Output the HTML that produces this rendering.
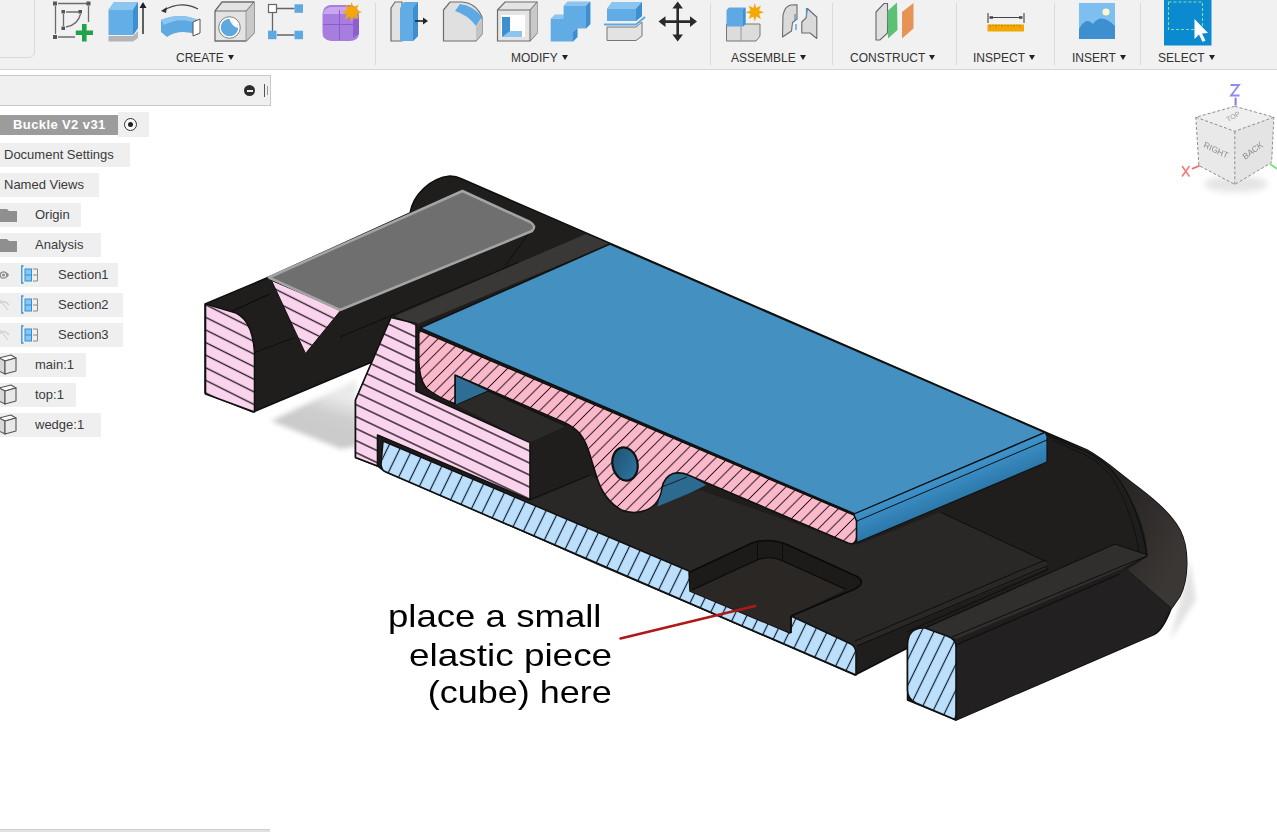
<!DOCTYPE html>
<html><head><meta charset="utf-8">
<style>
html,body{margin:0;padding:0;}
body{width:1277px;height:832px;overflow:hidden;background:#fff;position:relative;font-family:"Liberation Sans",sans-serif;}
.abs{position:absolute;}
#tb{left:0;top:0;width:1277px;height:69px;background:#f1f1f1;border-bottom:1px solid #d6d6d6;}
.sep{position:absolute;top:3px;width:1px;height:62px;background:#dcdcdc;}
.lbl{position:absolute;top:51px;font-size:12px;color:#333;white-space:nowrap;line-height:14px;}
.lbl:after{content:"";display:inline-block;margin-left:4px;border-left:3.5px solid transparent;border-right:3.5px solid transparent;border-top:5px solid #222;vertical-align:2px;}
#lbox{left:-5px;top:-5px;width:38px;height:61px;background:#f1f1f1;border:1px solid #d9d9d9;border-radius:6px;}
#ph{left:-2px;top:75px;width:271px;height:29px;background:#f0f0f0;border:1px solid #c8c8c8;}
.it{position:absolute;left:0;height:24px;background:#efefef;font-size:13px;color:#3a3a3a;line-height:24px;white-space:nowrap;}
.it span{position:absolute;}
#ann{left:0;top:0;}
.an{position:absolute;font-size:32px;color:#000;white-space:nowrap;line-height:37px;transform-origin:100% 50%;transform:scaleX(1.15);text-align:right;}
</style></head><body>
<div id="tb" class="abs">
  <div id="lbox" class="abs"></div>
  <div class="sep" style="left:375px"></div>
  <div class="sep" style="left:710px"></div>
  <div class="sep" style="left:832px"></div>
  <div class="sep" style="left:956px"></div>
  <div class="sep" style="left:1054px"></div>
  <div class="sep" style="left:1140px"></div>
  <div class="lbl" style="left:176px">CREATE</div>
  <div class="lbl" style="left:511px">MODIFY</div>
  <div class="lbl" style="left:731px">ASSEMBLE</div>
  <div class="lbl" style="left:850px">CONSTRUCT</div>
  <div class="lbl" style="left:973px">INSPECT</div>
  <div class="lbl" style="left:1072px">INSERT</div>
  <div class="lbl" style="left:1158px">SELECT</div>
  <!--ICONS-->
<svg class="abs" style="left:0;top:0" width="1277" height="69" viewBox="0 0 1277 69">
<!-- sketch -->
<g stroke="#6b6b6b" stroke-width="1.3" fill="none">
<path d="M55.5,6 V34 M58,3.5 H87 M88.5,6 V22 M58,37 H75"/>
<path d="M63.5,14 V26 M66,12 H79 M66,27 Q78,25 80.5,14"/>
</g>
<g fill="#555">
<rect x="53" y="1.5" width="4" height="4"/><rect x="86.5" y="1.5" width="4" height="4"/><rect x="53" y="35" width="4" height="4"/>
<rect x="61.5" y="10" width="3.5" height="3.5"/><rect x="78.5" y="10" width="3.5" height="3.5"/><rect x="61.5" y="26.5" width="3.5" height="3.5"/>
</g>
<path d="M84.3,24 V41.5 M75.8,32.8 H93" stroke="#1fa34a" stroke-width="4.6"/>
<!-- extrude -->
<path d="M108.5,36 L133,36 L138,31 L138,38 L133,41.5 L108.5,41.5 Z" fill="#b5b5b5"/>
<path d="M108.5,10 L114,2 L138,2 L138,28 L133,35 L108.5,35 Z" fill="#63aee6"/>
<path d="M108.5,10 L114,2 L138,2 L133,10 Z" fill="#8cc6f0"/>
<path d="M133,10 L138,2 L138,28 L133,35 Z" fill="#3d8fd0"/>
<path d="M143,34 V5" stroke="#222" stroke-width="1.4"/><path d="M139.5,8 L143,2 L146.5,8 Z" fill="#222"/>
<!-- revolve -->
<path d="M163,11 Q180,0 198,9" stroke="#444" stroke-width="1.2" fill="none"/><path d="M161,11 L167,7 L166,13 Z" fill="#333"/>
<path d="M161,20 Q180,12 198,20 L198,35 Q180,28 167,37 L161,32 Z" fill="#5da9e2"/>
<path d="M161,20 Q180,12 198,20 L198,24 Q180,16 164,25 Z" fill="#8cc6f0"/>
<path d="M193,22 L200,19 L200,33 L193,36 Z" fill="#fff" stroke="#555" stroke-width="1"/>
<!-- hole -->
<path d="M215,11 L222,2 L254,2 L254,33 L246,41 L215,41 Z" fill="#e3e3e3" stroke="#6d6d6d" stroke-width="1.3"/>
<path d="M246,11 L254,2 L254,33 L246,41 Z" fill="#c9c9c9"/>
<path d="M215,11 L246,11 L254,2" stroke="#6d6d6d" stroke-width="1" fill="none"/>
<path d="M246,11 V41" stroke="#8a8a8a" stroke-width="0.8"/>
<circle cx="229.5" cy="27.5" r="9.5" fill="#5ea8e0" stroke="#fff" stroke-width="1.5"/>
<circle cx="229.5" cy="27.5" r="10.8" fill="none" stroke="#777" stroke-width="0.9"/>
<path d="M229,18 Q232,27 238,28 Q239,20 229,18 Z" fill="#fff"/>
<!-- pattern -->
<path d="M272.5,13 V31 M277,8.5 H294.5 M277,35 H294.5" stroke="#666" stroke-width="1.3"/>
<rect x="268.5" y="4.5" width="8" height="8" fill="#fff" stroke="#666" stroke-width="1.2"/>
<rect x="294.5" y="4.3" width="8.5" height="8.5" fill="#5ca9e4"/>
<rect x="268" y="30.7" width="8.5" height="8.5" fill="#5ca9e4"/>
<rect x="294.5" y="30.7" width="8.5" height="8.5" fill="#5ca9e4"/>
<!-- form -->
<path d="M330,5 L350,5 Q359,6 359,15 L359,34 Q358,41 350,41 L331,41 Q322,40 322.5,32 L322.5,14 Q323,6 330,5 Z" fill="#a77ee0"/>
<path d="M323,14 Q324,8 331,7 L350,7 L352,14 Z" fill="#c9a6f0"/>
<path d="M339.5,10 V40 M323,24.5 H356" stroke="#8a5ccc" stroke-width="1"/>
<path d="M353,20 L359,17 L359,34 L353,38 Z" fill="#8a5fd0"/>
<path d="M351.7,2 L353.4,7.5 L358.5,4.5 L356.5,10 L362,12 L356.5,14 L358.5,19.5 L353.4,16.5 L351.7,22 L350,16.5 L344.9,19.5 L347,14 L341.5,12 L347,10 L344.9,4.5 L350,7.5 Z" fill="#f5a800"/>
<!-- press pull -->
<path d="M391,8 L395,2 L402,2 L402,41 L391,41 Z" fill="#e2e2e2" stroke="#6d6d6d" stroke-width="1.2"/>
<path d="M400,8 L404,2 L418,2 L418,36 L413,41 L400,41 Z" fill="#62ace5"/>
<path d="M413,8 L418,2 L418,36 L413,41 Z" fill="#3d8fd0"/>
<path d="M415,21 H424" stroke="#222" stroke-width="1.6"/><path d="M423,17.5 L428,21 L423,24.5 Z" fill="#222"/>
<!-- fillet -->
<path d="M443.5,10 L450,2 L462,2 Q476,3 482,17 L482,34 L476,41 L443.5,41 Z" fill="#e0e0e0" stroke="#6d6d6d" stroke-width="1.2"/>
<path d="M460,4 Q474,6 482,17 L476,26 Q468,15 455,11 Z" fill="#5ea9e3"/>
<path d="M476,26 L482,19 L482,34 L476,41 Z" fill="#c4c4c4"/>
<!-- shell -->
<path d="M497.5,10 L505,2 L537,2 L537,33 L530,41 L497.5,41 Z" fill="#e4e4e4" stroke="#6d6d6d" stroke-width="1.2"/>
<path d="M530,10 L537,2 L537,33 L530,41 Z" fill="#c8c8c8"/>
<path d="M497.5,10 L530,10 L537,2 M530,10 V41" stroke="#6d6d6d" stroke-width="1" fill="none"/>
<rect x="501" y="15" width="24" height="22" fill="#fff"/>
<path d="M502,17 H510 V31 H522 V37 H502 Z" fill="#3d8fd0"/><path d="M502,37 L510,31 H522 V37 Z" fill="#8cc6f0"/>
<!-- combine -->
<path d="M550.7,19 L555,14.7 H563.6 V6 L567.6,1.7 H590.3 V24 L586,28.4 H577.4 V37 L573,41.4 H550.7 Z" fill="#62ace5"/>
<path d="M550.7,19 L555,14.7 H563.6 V19 Z M563.6,6 L567.6,1.7 H590.3 L586,6 Z" fill="#8cc6f0"/>
<path d="M586,6 L590.3,1.7 V24 L586,28.4 Z M573,32.5 L577.4,28.4 V37 L573,41.4 Z" fill="#3d8fd0"/>
<!-- split -->
<path d="M607,9 L612,2 L642,2 L642,16 L636,21 L607,21 Z" fill="#62ace5"/>
<path d="M607,9 L612,2 L642,2 L636,9 Z" fill="#8cc6f0"/><path d="M636,9 L642,2 L642,16 L636,21 Z" fill="#3d8fd0"/>
<path d="M604,24.5 L636,24.5 L645,17" stroke="#5ea9e3" stroke-width="2" fill="none"/>
<path d="M607,27 L636,27 L642,22 L642,36 L636,40.5 L607,40.5 Z" fill="#e3e3e3" stroke="#777" stroke-width="1"/>
<!-- move -->
<path d="M677.7,6 V38 M661,21.6 H694" stroke="#2a2a2a" stroke-width="2.6"/>
<path d="M677.7,1.5 L683,8.5 L672.4,8.5 Z M677.7,41.5 L683,34.5 L672.4,34.5 Z M658.5,21.6 L665.5,16.3 L665.5,26.9 Z M697,21.6 L690,16.3 L690,26.9 Z" fill="#2a2a2a"/>
<!-- new joint -->
<path d="M726.5,24 H760 L760,36 L756,41 H726.5 Z" fill="#dcdcdc" stroke="#777" stroke-width="1"/>
<path d="M741,24 V41" stroke="#888" stroke-width="0.8"/>
<path d="M726.5,10 L729,7.5 L745.5,7.5 L745.5,24 L743,26.5 L726.5,26.5 Z" fill="#5ea9e3"/>
<path d="M743,10 L745.5,7.5 L745.5,24 L743,26.5 Z" fill="#3d8fd0"/>
<path d="M754.8,3 L756.3,8 L761,5.5 L759,10.5 L764,12.2 L759,14 L761,19 L756.3,16.5 L754.8,21.5 L753.3,16.5 L748.6,19 L750.6,14 L745.6,12.2 L750.6,10.5 L748.6,5.5 L753.3,8 Z" fill="#f5a800"/>
<!-- joint -->
<path d="M782.5,37 L783,15 Q785,6 791,5 L797,4.7 L797,19 L792.5,22.5 L791.5,31 Z" fill="#dadada" stroke="#6a6a6a" stroke-width="1.1" stroke-linejoin="round"/>
<path d="M801.8,22 L806,18 L807.4,8.5 L816.8,17 L816.8,38.5 L810,33 L801.8,33 Z" fill="#dadada" stroke="#6a6a6a" stroke-width="1.1" stroke-linejoin="round"/>
<path d="M795,14 V21 M806.5,8 V17 M796,24 V30" stroke="#4a9ad8" stroke-width="1.3"/>
<!-- construct -->
<path d="M876,12 L884,3.5 L887.5,3.5 L887.5,33 L880,40 L876,40 Z" fill="#e0e0e0" stroke="#666" stroke-width="1.1"/>
<path d="M887.5,11 L897,2.5 L897.5,30 L888,38.5 Z" fill="#5cc174"/>
<path d="M902,12 L913.5,3 L913.5,28.5 L902,38.5 Z" fill="#e69456"/>
<!-- inspect -->
<path d="M988,13 V23 M1024,13 V23 M990,17.5 H1022" stroke="#444" stroke-width="1.1"/>
<path d="M993,17.5 L989.5,17.5 M1019,17.5 L1022.5,17.5" stroke="#444" stroke-width="2.5"/>
<rect x="987.5" y="24.5" width="36.5" height="7" fill="#f2a800"/>
<path d="M990,24.5 V27 M993,24.5 V26 M996,24.5 V27 M999,24.5 V26 M1002,24.5 V27 M1005,24.5 V26 M1008,24.5 V27 M1011,24.5 V26 M1014,24.5 V27 M1017,24.5 V26 M1020,24.5 V27" stroke="#b56f00" stroke-width="0.8"/>
<!-- insert -->
<rect x="1079" y="3" width="36" height="36" fill="#7dbff0"/>
<path d="M1079,29 Q1086,16 1093,24 Q1101,12 1115,26 L1115,39 L1079,39 Z" fill="#3d8fd0"/>
<circle cx="1106" cy="12" r="3.6" fill="#fff5c8"/>
<!-- select -->
<rect x="1164" y="0" width="47.5" height="45.5" fill="#0b8ad0"/>
<rect x="1168.5" y="2" width="34" height="27.5" fill="none" stroke="#7fe0a8" stroke-width="1.1" stroke-dasharray="3 2"/>
<path d="M1194.5,19 L1194.5,39 L1199,34.5 L1202.5,42 L1205.5,40.5 L1202,33.5 L1208,33 Z" fill="#fff"/>
</svg>

</div>
<div id="ph" class="abs"></div>
<!--PANEL-->
<div class="abs" style="left:244px;top:85px;width:11px;height:11px;border-radius:50%;background:#2e2e2e;"></div>
<div class="abs" style="left:246.5px;top:90px;width:6px;height:1.6px;background:#f0f0f0;"></div>
<div class="abs" style="left:264px;top:84px;width:1px;height:13px;background:#555;"></div>
<div class="abs" style="left:267px;top:86px;width:1px;height:9px;background:#999;"></div>
<div class="it" style="top:115px;width:118px;height:20px;line-height:20px;background:#9c9c9c;color:#fff;font-weight:bold;font-size:13px;letter-spacing:0.4px;"><span style="left:13px">Buckle V2 v31</span></div>
<div class="it" style="top:112px;left:118px;width:31px;height:25px;background:#efefef;"></div>
<div class="abs" style="left:123.5px;top:117.5px;width:13px;height:13px;border-radius:50%;border:1.6px solid #333;box-sizing:border-box;background:#fafafa;"></div>
<div class="abs" style="left:127.5px;top:121.5px;width:5px;height:5px;border-radius:50%;background:#222;"></div>
<div class="it" style="top:143px;width:130px;"><span style="left:4px">Document Settings</span></div>
<div class="it" style="top:173px;width:99px;"><span style="left:4px">Named Views</span></div>
<div class="it" style="top:203px;width:81px;"><span style="left:35px">Origin</span></div>
<div class="it" style="top:233px;width:101px;"><span style="left:35px">Analysis</span></div>
<div class="it" style="top:263px;width:118px;"><span style="left:58px">Section1</span></div>
<div class="it" style="top:293px;width:123px;"><span style="left:58px">Section2</span></div>
<div class="it" style="top:323px;width:123px;"><span style="left:58px">Section3</span></div>
<div class="it" style="top:353px;width:86px;"><span style="left:35px">main:1</span></div>
<div class="it" style="top:383px;width:76px;"><span style="left:35px">top:1</span></div>
<div class="it" style="top:413px;width:101px;"><span style="left:35px">wedge:1</span></div>
<svg class="abs" style="left:0;top:195px" width="60" height="250" viewBox="0 195 60 250">
<path d="M0,209 H7 L9,211 H17 V222 H0 Z" fill="#8f8f8f"/>
<path d="M0,239 H7 L9,241 H17 V252 H0 Z" fill="#8f8f8f"/>
<path d="M-2,275 Q3.5,267.5 9,275 Q3.5,282.5 -2,275 Z" fill="#8a8a8a"/><circle cx="3.5" cy="275" r="2.6" fill="#efefef"/><circle cx="3.5" cy="275" r="1.5" fill="#8a8a8a"/>
<path d="M-2,305 Q3.5,298 9,305" stroke="#d2d2d2" stroke-width="1.6" fill="none"/><path d="M0,300 L8,310" stroke="#d2d2d2" stroke-width="1.2"/>
<path d="M-2,335 Q3.5,328 9,335" stroke="#d2d2d2" stroke-width="1.6" fill="none"/><path d="M0,330 L8,340" stroke="#d2d2d2" stroke-width="1.2"/>
<g>
<rect x="25" y="269" width="6.5" height="12" fill="#86c6f2" stroke="#2f8fd8" stroke-width="1"/><path d="M25,275 H31.5" stroke="#2f8fd8" stroke-width="1"/>
<path d="M23.5,266 H21.8 V283 H23.5" fill="none" stroke="#2f8fd8" stroke-width="1.3"/><path d="M33,269 H37.5 V281 H33 M33,275 H37.5" fill="none" stroke="#8a8a8a" stroke-width="1"/>
<rect x="25" y="299" width="6.5" height="12" fill="#86c6f2" stroke="#2f8fd8" stroke-width="1"/><path d="M25,305 H31.5" stroke="#2f8fd8" stroke-width="1"/>
<path d="M23.5,296 H21.8 V313 H23.5" fill="none" stroke="#2f8fd8" stroke-width="1.3"/><path d="M33,299 H37.5 V311 H33 M33,305 H37.5" fill="none" stroke="#8a8a8a" stroke-width="1"/>
<rect x="25" y="329" width="6.5" height="12" fill="#86c6f2" stroke="#2f8fd8" stroke-width="1"/><path d="M25,335 H31.5" stroke="#2f8fd8" stroke-width="1"/>
<path d="M23.5,326 H21.8 V343 H23.5" fill="none" stroke="#2f8fd8" stroke-width="1.3"/><path d="M33,329 H37.5 V341 H33 M33,335 H37.5" fill="none" stroke="#8a8a8a" stroke-width="1"/>
</g>
<g stroke="#555" stroke-width="1.1" stroke-linejoin="round">
<path d="M-1,358 L11,355 L16,358 L5,361 Z" fill="#fafafa"/><path d="M-1,358 L5,361 L5,374 L-1,371 Z" fill="#d8d8d8"/><path d="M5,361 L16,358 L16,371 L5,374 Z" fill="#e8e8e8"/>
<path d="M-1,388 L11,385 L16,388 L5,391 Z" fill="#fafafa"/><path d="M-1,388 L5,391 L5,404 L-1,401 Z" fill="#d8d8d8"/><path d="M5,391 L16,388 L16,401 L5,404 Z" fill="#e8e8e8"/>
<path d="M-1,418 L11,415 L16,418 L5,421 Z" fill="#fafafa"/><path d="M-1,418 L5,421 L5,434 L-1,431 Z" fill="#d8d8d8"/><path d="M5,421 L16,418 L16,431 L5,434 Z" fill="#e8e8e8"/>
</g>
</svg>
<div class="abs" style="left:0;top:829px;width:270px;height:3px;background:#e2e2e2;border-top:1px solid #d0d0d0;"></div>

<!--MODEL-->
<svg class="abs" style="left:0;top:0" width="1277" height="832" viewBox="0 0 1277 832">
<defs>
<pattern id="hH" patternUnits="userSpaceOnUse" width="40" height="12" patternTransform="matrix(1,0.475,0,1,0,1.5)">
<rect width="40" height="12" fill="#f9d4ec"/><line x1="0" y1="6" x2="40" y2="6" stroke="#24161e" stroke-width="1.3"/></pattern>
<pattern id="hW" patternUnits="userSpaceOnUse" width="40" height="12.6" patternTransform="matrix(1,0.5,0,1,0,6.6)">
<rect width="40" height="12.6" fill="#f9d4ec"/><line x1="0" y1="6.3" x2="40" y2="6.3" stroke="#24161e" stroke-width="1.3"/></pattern>
<pattern id="hD" patternUnits="userSpaceOnUse" width="12.4" height="40" patternTransform="matrix(1,0,-1,1,1.8,0)">
<rect width="12.4" height="40" fill="#f9b9ca"/><line x1="6.2" y1="0" x2="6.2" y2="40" stroke="#2a1218" stroke-width="1.35"/></pattern>
<pattern id="hB" patternUnits="userSpaceOnUse" width="12.6" height="40" patternTransform="matrix(1,0,-0.488,1,7.8,0)">
<rect width="12.6" height="40" fill="#bcdffc"/><line x1="6.3" y1="0" x2="6.3" y2="40" stroke="#0c1a2e" stroke-width="1.3"/></pattern>
<pattern id="hB2" patternUnits="userSpaceOnUse" width="12.6" height="40" patternTransform="matrix(1,0,-0.488,1,1.1,0)">
<rect width="12.6" height="40" fill="#bcdffc"/><line x1="6.3" y1="0" x2="6.3" y2="40" stroke="#0c1a2e" stroke-width="1.3"/></pattern>
<linearGradient id="gSide" gradientUnits="userSpaceOnUse" x1="948" y1="476" x2="958" y2="500"><stop offset="0" stop-color="#3d91c8"/><stop offset="1" stop-color="#2c78aa"/></linearGradient>
<linearGradient id="gShadow" gradientUnits="userSpaceOnUse" x1="320" y1="445" x2="335" y2="395"><stop offset="0" stop-color="#c9c9c9"/><stop offset="0.6" stop-color="#cdcdcd"/><stop offset="1" stop-color="#eaeaea"/></linearGradient>
<linearGradient id="gShell" gradientUnits="userSpaceOnUse" x1="1110" y1="500" x2="1188" y2="540"><stop offset="0" stop-color="#262422"/><stop offset="1" stop-color="#3a3735"/></linearGradient>
<linearGradient id="gHole" x1="0" y1="0" x2="1" y2="1"><stop offset="0" stop-color="#1d4e6e"/><stop offset="1" stop-color="#3079a4"/></linearGradient>
<filter id="blur4" x="-50%" y="-50%" width="200%" height="200%"><feGaussianBlur stdDeviation="7"/></filter>
<filter id="blur2" x="-50%" y="-50%" width="200%" height="200%"><feGaussianBlur stdDeviation="2.5"/></filter>
</defs>
<!-- shadows -->
<path d="M271,421 L356,380 L357,446 L341,449 Z" fill="url(#gShadow)" filter="url(#blur2)"/>
<path d="M1178,610 L1190,560 L1196,600 L1170,640 Z" fill="#e2e2e2" filter="url(#blur2)"/>
<!-- black silhouette -->
<path d="M205,304 L269,277 L410,213 C413,195 430,178 450,176 Q456,176 462,179 L1045,432 L1087,450 C1105,460 1120,474 1131,482 C1150,496 1170,512 1180,530 C1190,550 1188,580 1180,596 L1171,609 C1166,622 1160,632 1154,634.5 L956,720 L907.5,700 L907.5,648 L855,675 L384,471 L377.5,466 L355.5,457.5 L355.5,400 L372,362 L253,412 L205,393 Z" fill="#201e1d" stroke="#0e0e0e" stroke-width="1.5" stroke-linejoin="round"/>
<!-- shell rounded end lighter surface -->
<path d="M1047,435 L1087,452 C1100,458 1112,468 1122,484 C1133,500 1142,520 1146,540 L1148,556 L1127,570 L1171,609 L1180,596 C1188,580 1190,550 1180,530 C1170,512 1150,496 1131,482 C1120,474 1105,460 1087,450 Z" fill="url(#gShell)"/>
<path d="M1047,435 L1087,452 C1100,458 1112,468 1122,484 C1135,505 1143,530 1147,556 L1124,568" fill="none" stroke="#0e0e0e" stroke-width="1.1"/>
<path d="M1053,440 L1087,456 C1100,463 1109,472 1117,486 C1127,505 1135,527 1139,552" fill="none" stroke="#0e0e0e" stroke-width="0.8"/>
<path d="M1127,570 L1171,608" fill="none" stroke="#0e0e0e" stroke-width="1"/>
<!-- bar side & top -->
<path d="M956,645 L1120,573 L1127,570 L1171,608 L1154,634.5 L956,720 Z" fill="#222020"/>
<path d="M925,628 L1115,544 L1148,555 L1124,568 L956,639 Z" fill="#312f2d"/>
<path d="M925,628 L1115,544 L1148,555" fill="none" stroke="#0e0e0e" stroke-width="1.1"/>
<path d="M952,637 L1120,567 L1147,556" fill="none" stroke="#0e0e0e" stroke-width="1"/>
<path d="M956,645 L1120,574" fill="none" stroke="#0e0e0e" stroke-width="1.1"/>
<!-- plate top surface right compartment -->
<path d="M600,566 L383,470 L530,500 L590,475 L640,510 L700,490 L857,545 L940,512 L1047,562 L1047,568 L857,646 L855,675 Z" fill="#2a2826"/>
<path d="M855,641 L1045,560" fill="none" stroke="#0e0e0e" stroke-width="1"/>
<path d="M857,646 L1047,566 L1047,570 L907,632" fill="none" stroke="#0e0e0e" stroke-width="1"/>
<path d="M940,512 L1047,562" fill="none" stroke="#0e0e0e" stroke-width="1"/>
<!-- band top strip -->
<path d="M395,316 L586,234 L610,244 L415,325 Z" fill="#3a3836"/>
<path d="M340,337 L519,262" fill="none" stroke="#0e0e0e" stroke-width="1"/>
<!-- wedge lines -->
<path d="M231,311.5 L270,294" fill="none" stroke="#0e0e0e" stroke-width="1.1"/>
<path d="M254.5,352.5 L295,337.5" fill="none" stroke="#0e0e0e" stroke-width="1"/>
<path d="M532,229 L505,266" fill="none" stroke="#0e0e0e" stroke-width="1"/>
<!-- wedge pink end -->
<path d="M205.5,304 L231,311.5 Q252,316 254.5,352 L254.5,412 L205.5,394 Z" fill="url(#hW)" stroke="#111" stroke-width="1.6" stroke-linejoin="round"/>
<!-- V notch pink -->
<path d="M271.5,280.5 L341,310 L305.5,353.5 Z" fill="url(#hW)" stroke="#111" stroke-width="1"/>
<!-- gray top -->
<path d="M269,277.5 L462.5,191 L530,222 Q537,226 532,231 L340,310 Z" fill="#6f6f6f" stroke="#a4a4a4" stroke-width="2.5" stroke-linejoin="round"/>
<!-- main body pink L -->
<path d="M391,317.5 L416,323.5 L416,391 L530,442.5 L530,500 L377.5,435 L377.5,466 L355.5,457.5 L355.5,400 Z" fill="url(#hH)" stroke="#111" stroke-width="1.6" stroke-linejoin="round"/>
<!-- slot interior: prong top and teal -->
<path d="M456,405 L488,391 L566,426 L530,442.5 Z" fill="#2c2a28"/>
<path d="M456,376 L456,405 L488,391 Z" fill="#2e6e94"/>
<path d="M456,405 L488,391 L566,426" fill="none" stroke="#0e0e0e" stroke-width="1"/>
<path d="M530,500 L590,475" fill="none" stroke="#0e0e0e" stroke-width="1.2"/>
<!-- base plate light blue -->
<path d="M383,441 L689,571 L690,591 L790,633 L791,616 L851,644 Q856,647 856,653 L856,675 L386,472 Q381,470 381,464 Z" fill="url(#hB)" stroke="#111" stroke-width="1.6" stroke-linejoin="round"/>
<!-- pocket -->
<path d="M690,572 L752,543 Q770,537 788,545 L858,577 Q866,583 855,589 L791,616 L791,633 L690,591 Z" fill="#1c1b1a"/>
<path d="M692,590 L757,560 Q770,555 783,561 L846,589.5 L791,616 L791,633 L690,591 Z" fill="#2a2725"/>
<path d="M690,572 L752,543 Q770,537 788,545 L858,577 Q866,583 855,589 L791,616" fill="none" stroke="#0a0a0a" stroke-width="1.6"/>
<path d="M692,590 L757,560 Q770,555 783,561 L846,589.5" fill="none" stroke="#0a0a0a" stroke-width="1.2"/>
<path d="M757.5,542 L757.5,560 M782.5,543 L782.5,561" fill="none" stroke="#0a0a0a" stroke-width="0.9"/>
<path d="M791,616 L791,633" fill="none" stroke="#0a0a0a" stroke-width="1.8"/>
<!-- blue top -->
<path d="M420,328 L610,244 L1045,432.5 L855,514 Z" fill="#4390c1" stroke="#111" stroke-width="1.5" stroke-linejoin="round"/>
<path d="M854,514 L1045,432.5 L1047,436 L1047,462 L857,542.5 Z" fill="url(#gSide)" stroke="#111" stroke-width="1.2" stroke-linejoin="round"/>
<path d="M857,521 L1047,440" stroke="#111" stroke-width="1" fill="none"/>
<!-- lobe gap -->
<path d="M662,486 L666,477 L676,472.5 L689,475 L706,485 L690,493 L657.5,506.5 Z" fill="#2d6a90"/>
<path d="M662,487 L687,477" fill="none" stroke="#0e0e0e" stroke-width="0.8"/>
<!-- pink diag section -->
<path d="M418.75,330 L854,515 L856.5,521 L856.5,537 Q856,546 848,543 L688.8,475.2 Q680,471.5 673,473.6 Q664,477 662,488 Q660,504 646.5,510 Q634,515 621.4,510 Q604,500 597,478 L589,452 Q584,436 576,429.8 Q569,424 556,419 L455,375 L455,403.75 Q437,397 426,388 Q419,378 418.75,360 Z" fill="url(#hD)" stroke="#111" stroke-width="1.6" stroke-linejoin="round"/>
<ellipse cx="625" cy="464" rx="12.5" ry="16.8" transform="rotate(-12 625 464)" fill="url(#gHole)" stroke="#111" stroke-width="2.2"/>
<!-- bar end face -->
<path d="M907.5,690 L907.5,645 Q908,627 925,628 L947,636 Q956,639 956,647 L956,720 L916,703 Q907.5,699 907.5,690 Z" fill="url(#hB2)" stroke="#111" stroke-width="1.6" stroke-linejoin="round"/>
<!-- red annotation line -->
<line x1="620.5" y1="638.5" x2="755" y2="606" stroke="#b01818" stroke-width="2.6" stroke-linecap="round"/>
</svg>
<div class="an" style="right:665px;top:598px;transform:scaleX(1.143)">place a small&nbsp;</div>
<div class="an" style="right:665px;top:636.5px;transform:scaleX(1.153)">elastic piece</div>
<div class="an" style="right:665px;top:674px;transform:scaleX(1.124)">(cube) here</div>

<!--CUBE-->
<svg class="abs" style="left:1170px;top:75px" width="107" height="135" viewBox="1170 75 107 135">
<defs><filter id="cb" x="-50%" y="-50%" width="200%" height="200%"><feGaussianBlur stdDeviation="3"/></filter>
<filter id="cb1"><feGaussianBlur stdDeviation="0.5"/></filter></defs>
<ellipse cx="1236" cy="184" rx="32" ry="8" fill="#e4e4e4" filter="url(#cb)"/>
<g filter="url(#cb1)">
<path d="M1234.8,106.3 L1273.9,117.2 L1234.8,131.3 L1195.8,117.2 Z" fill="#efefef"/>
<path d="M1195.8,117.2 L1234.8,131.3 L1234.8,184.4 L1198.9,165.6 Z" fill="#e9e9e9"/>
<path d="M1234.8,131.3 L1273.9,117.2 L1271.6,162.5 L1234.8,184.4 Z" fill="#e4e4e4"/>
<g fill="none" stroke="#8c8c8c" stroke-width="1" stroke-dasharray="3 2">
<path d="M1234.8,106.3 L1273.9,117.2 L1271.6,162.5 L1234.8,184.4 L1198.9,165.6 L1195.8,117.2 Z"/>
<path d="M1195.8,117.2 L1234.8,131.3 L1273.9,117.2 M1234.8,131.3 V184.4"/>
</g>
<path d="M1235.6,97.7 V105.5" stroke="#7b7bf0" stroke-width="2"/>
<path d="M1230.5,85 H1239 L1231,95.5 H1239.5" fill="none" stroke="#8a8af2" stroke-width="1.8"/>
<path d="M1191.9,168.8 L1199.7,165.6" stroke="#f07272" stroke-width="1.8"/>
<path d="M1182,166 L1189.5,176.5 M1189.5,166 L1182,176.5" stroke="#f07878" stroke-width="1.5"/>
<path d="M1270,164 L1277,168.8" stroke="#78e078" stroke-width="2"/>
<text x="0" y="0" font-family="Liberation Sans" font-size="8.5" fill="#8d8d8d" transform="translate(1203,147) rotate(21) skewY(5)">RIGHT</text>
<text x="0" y="0" font-family="Liberation Sans" font-size="8.5" fill="#8d8d8d" transform="translate(1245,160) rotate(-32) skewY(-5)">BACK</text>
<text x="0" y="0" font-family="Liberation Sans" font-size="7" fill="#9a9a9a" transform="translate(1228,122) rotate(-28)">TOP</text>
</g>
</svg>

</body></html>
